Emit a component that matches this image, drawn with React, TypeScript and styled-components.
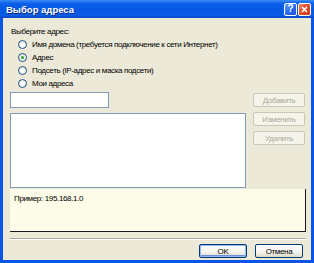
import React from 'react'
import styled, { createGlobalStyle, css } from 'styled-components'

const Global = createGlobalStyle`
	html, body {
		margin: 0;
		padding: 0;
		background: #ffffff;
	}
	body {
		font-family: 'Liberation Sans', 'DejaVu Sans', sans-serif;
		font-size: 8px;
		letter-spacing: -0.35px;
		color: #000;
	}
`

const Window = styled.div`
	width: 314px;
	height: 263px;
	box-sizing: border-box;
	display: flex;
	flex-direction: column;
	background: #0a55e6;
	padding: 0 3px 3px 3px;
`

const TitleBar = styled.div`
	flex-shrink: 0;
	height: 18px;
	margin: 0 -3px;
	padding: 0 3px 0 6px;
	display: flex;
	align-items: center;
	background: linear-gradient(
		to bottom,
		#3b8cf6 0%,
		#0c5fe9 20%,
		#0457e3 60%,
		#0a5ce6 85%,
		#0846c9 100%
	);
	color: #fff;
	font-weight: bold;
	font-size: 9.5px;
	letter-spacing: 0;
	text-shadow: 1px 1px 0 #0a2a8a;
`

const Title = styled.span`
	flex: 1;
`

const CaptionButton = styled.div<{ $close?: boolean }>`
	width: 13px;
	height: 13px;
	box-sizing: border-box;
	border: 1px solid #fff;
	border-radius: 2px;
	display: flex;
	align-items: center;
	justify-content: center;
	margin-left: 1px;
	background: ${(p) =>
		p.$close
			? 'linear-gradient(135deg, #f0886a 0%, #e0502a 45%, #c8361a 100%)'
			: 'linear-gradient(135deg, #6ea6ff 0%, #2a6ef0 45%, #1c52d8 100%)'};
	color: #fff;
	font-size: 10px;
	font-weight: bold;
	text-shadow: none;
	line-height: 1;
`

const Body = styled.div`
	flex: 1;
	background: #ece9d8;
	padding: 9px 5px 2px 7px;
	display: flex;
	flex-direction: column;
	> * {
		flex-shrink: 0;
	}
`

const Prompt = styled.div`
	height: 10px;
	line-height: 10px;
	margin-left: 1px;
`

const RadioList = styled.div`
	margin-top: 1px;
	padding-left: 8px;
	display: flex;
	flex-direction: column;
`

const RadioRow = styled.label`
	height: 13px;
	display: flex;
	align-items: center;
	gap: 5px;
	white-space: nowrap;
`

const RadioDot = styled.span<{ $checked?: boolean }>`
	width: 9px;
	height: 9px;
	box-sizing: border-box;
	border-radius: 50%;
	border: 1px solid #1c5180;
	background: radial-gradient(circle at 60% 60%, #ffffff 30%, #dcd9cd 100%);
	display: flex;
	align-items: center;
	justify-content: center;
	${(p) =>
		p.$checked &&
		css`
			&::after {
				content: '';
				width: 3px;
				height: 3px;
				border-radius: 50%;
				background: #21a121;
			}
		`}
`

const Middle = styled.div`
	margin-top: 2px;
	display: grid;
	grid-template-columns: 236px 52px;
	column-gap: 7px;
`

const LeftCol = styled.div`
	display: flex;
	flex-direction: column;
	gap: 5px;
`

const TextInput = styled.div`
	width: 99px;
	height: 16px;
	box-sizing: border-box;
	background: #fff;
	border: 1px solid #7f9db9;
`

const ListBox = styled.div`
	height: 75px;
	box-sizing: border-box;
	background: #fff;
	border: 1px solid #7f9db9;
`

const SideButtons = styled.div`
	padding-top: 1px;
	display: flex;
	flex-direction: column;
	gap: 5px;
`

const Button = styled.button<{ $default?: boolean }>`
	height: 14px;
	padding: 0;
	box-sizing: border-box;
	font-family: inherit;
	font-size: 8px;
	letter-spacing: -0.35px;
	border-radius: 2px;
	color: #000;
	border: 1px solid #003c74;
	background: linear-gradient(to bottom, #ffffff 0%, #f4f3ee 60%, #dcd8c8 100%);
	&:disabled {
		color: #aca899;
		border-color: #c9c7ba;
		background: #f5f4ea;
	}
	${(p) =>
		p.$default &&
		css`
			box-shadow: inset 0 0 0 1px #97b7f2, inset 0 -1px 0 1px #6a8fd8;
		`}
`

const InfoPanel = styled.div`
	margin-top: 1px;
	height: 43px;
	box-sizing: border-box;
	background: #fdfce8;
	border-right: 1px solid #1a1a1a;
	border-bottom: 1px solid #1a1a1a;
	padding: 5px 0 0 4px;
`

const Separator = styled.div`
	margin-top: 6px;
	height: 1px;
	background: #aca899;
	border-bottom: 1px solid #ffffff;
`

const Footer = styled.div`
	margin-top: 4px;
	padding-right: 3px;
	display: flex;
	justify-content: flex-end;
	gap: 8px;
	${Button} {
		width: 48px;
	}
`

const options = [
	'Имя домена (требуется подключение к сети Интернет)',
	'Адрес',
	'Подсеть (IP-адрес и маска подсети)',
	'Мои адреса',
]

export default function App() {
	return (
		<>
			<Global />
			<Window>
				<TitleBar>
					<Title>Выбор адреса</Title>
					<CaptionButton>?</CaptionButton>
					<CaptionButton $close>
						<svg width="7" height="7" viewBox="0 0 7 7">
							<path d="M1 1 L6 6 M6 1 L1 6" stroke="#fff" strokeWidth="1.6" />
						</svg>
					</CaptionButton>
				</TitleBar>
				<Body>
					<Prompt>Выберите адрес:</Prompt>
					<RadioList>
						{options.map((o, i) => (
							<RadioRow key={o}>
								<RadioDot $checked={i === 1} />
								{o}
							</RadioRow>
						))}
					</RadioList>
					<Middle>
						<LeftCol>
							<TextInput />
							<ListBox />
						</LeftCol>
						<SideButtons>
							<Button disabled>Добавить</Button>
							<Button disabled>Изменить</Button>
							<Button disabled>Удалить</Button>
						</SideButtons>
					</Middle>
					<InfoPanel>Пример: 195.168.1.0</InfoPanel>
					<Separator />
					<Footer>
						<Button $default>OK</Button>
						<Button>Отмена</Button>
					</Footer>
				</Body>
			</Window>
		</>
	)
}
